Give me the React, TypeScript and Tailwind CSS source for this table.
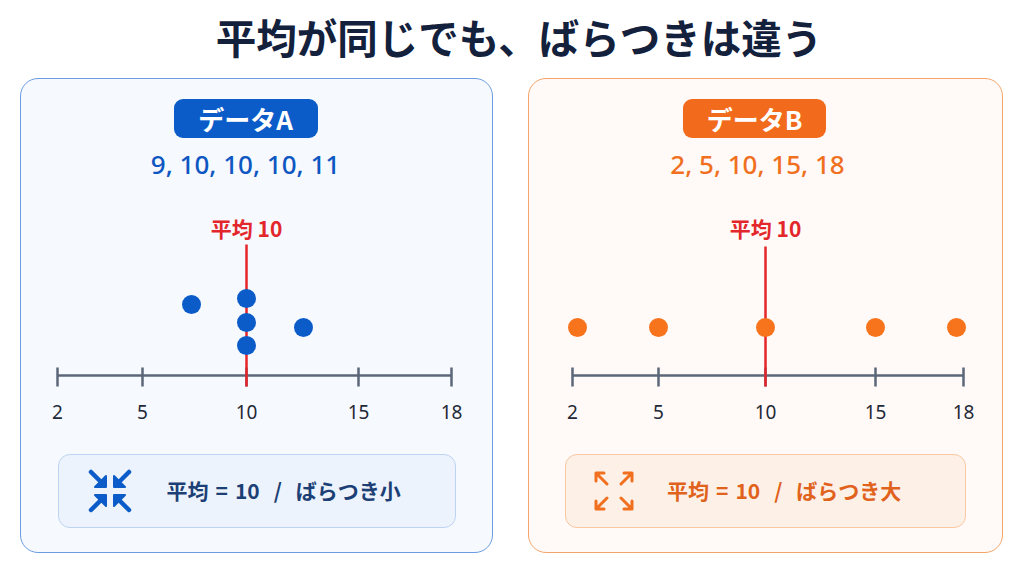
import React from "react";

type Dot = { x: number; y: number };

type ChartProps = {
  ticks: { x: number; label: string }[];
  axisFrom: number;
  axisTo: number;
  meanX: number;
  lineTop: number;
  dots: Dot[];
  dotColor: string;
};

function DotChart({ ticks, axisFrom, axisTo, meanX, lineTop, dots, dotColor }: ChartProps) {
  return (
    <svg width="470" height="262" viewBox="0 0 470 262" className="block">
      <text
        x={meanX}
        y={58.5}
        textAnchor="middle"
        fontSize="21"
        fontWeight="700"
        fill="#e3262b"
        fontFamily='"Noto Sans CJK JP", "Noto Sans", sans-serif'
      >
        平均 10
      </text>
      <line x1={axisFrom} y1={197.5} x2={axisTo} y2={197.5} stroke="#5b6778" strokeWidth="2.5" />
      {ticks.map((t) => (
        <g key={t.label}>
          <line x1={t.x} y1={189.5} x2={t.x} y2={208.5} stroke="#5b6778" strokeWidth="2.5" />
          <text
            x={t.x}
            y={240.5}
            textAnchor="middle"
            fontSize="19"
            fill="#1f2937"
            fontFamily='"Noto Sans", sans-serif'
          >
            {t.label}
          </text>
        </g>
      ))}
      <line x1={meanX} y1={lineTop} x2={meanX} y2={208.5} stroke="#e5252a" strokeWidth="2.5" />
      {dots.map((d, i) => (
        <circle key={i} cx={d.x} cy={d.y} r="9.5" fill={dotColor} />
      ))}
    </svg>
  );
}

function ShrinkIcon() {
  return (
    <svg width="44" height="44" viewBox="0 0 44 44" fill="#0b5cc8" stroke="#0b5cc8" strokeLinecap="round" strokeLinejoin="round">
      <line x1="3" y1="3" x2="12" y2="12" strokeWidth="4.5" />
      <polygon points="18,18 18,7 7,18" strokeWidth="2" />
      <line x1="41" y1="3" x2="32" y2="12" strokeWidth="4.5" />
      <polygon points="26,18 26,7 37,18" strokeWidth="2" />
      <line x1="3" y1="41" x2="12" y2="32" strokeWidth="4.5" />
      <polygon points="18,26 7,26 18,37" strokeWidth="2" />
      <line x1="41" y1="41" x2="32" y2="32" strokeWidth="4.5" />
      <polygon points="26,26 37,26 26,37" strokeWidth="2" />
    </svg>
  );
}

function ExpandIcon() {
  return (
    <svg width="44" height="44" viewBox="0 0 44 44" fill="none" stroke="#f0701f" strokeWidth="3" strokeLinecap="round" strokeLinejoin="round">
      <path d="M15 15 4 4M4 12V4h8" />
      <path d="M29 15 40 4M32 4h8v8" />
      <path d="M15 29 4 40M4 32v8h8" />
      <path d="M29 29 40 40M40 32v8h-8" />
    </svg>
  );
}

export default function App() {
  return (
    <div
      className="w-[1024px] h-[576px] bg-white flex flex-col overflow-hidden"
      style={{ fontFamily: '"Noto Sans", "Noto Sans CJK JP", sans-serif' }}
    >
      <div className="h-[78px] pb-[4px] pl-[14px] flex items-center justify-center">
        <h1 className="text-[40.5px] leading-none font-bold text-[#13213c]" style={{ fontFamily: '"Noto Sans CJK JP", sans-serif' }}>
          平均が同じでも、ばらつきは違う
        </h1>
      </div>

      <div className="flex gap-[35px] pl-[20px]">
        {/* data A */}
        <div className="w-[473px] h-[475px] rounded-[18px] border-[1.5px] border-[#6b9be0] bg-[#f6f9fe] flex flex-col items-center pt-[20px]">
          <div className="mr-[22px] w-[144px] h-[39px] rounded-[9px] bg-[#0b5cc8] flex items-center justify-center">
            <span className="text-white text-[26px] font-bold leading-none" style={{ fontFamily: '"Noto Sans CJK JP", sans-serif' }}>
              データA
            </span>
          </div>
          <div className="mr-[22px] mt-[12px] h-[28px] leading-[28px] text-[26px] font-medium text-[#0d57c2]">
            9, 10, 10, 10, 11
          </div>
          <DotChart
            ticks={[
              { x: 35.5, label: "2" },
              { x: 120.5, label: "5" },
              { x: 224.5, label: "10" },
              { x: 336.5, label: "15" },
              { x: 429.5, label: "18" },
            ]}
            axisFrom={35.5}
            axisTo={429.5}
            meanX={224.5}
            lineTop={66.5}
            dotColor="#0b5cc8"
            dots={[
              { x: 169.5, y: 126.5 },
              { x: 224.5, y: 120.5 },
              { x: 224.5, y: 144.5 },
              { x: 224.5, y: 167.5 },
              { x: 281.5, y: 149.5 },
            ]}
          />
          <div className="mt-[14px] w-[398px] h-[74px] rounded-[12px] border border-[#bcd3f1] bg-[#edf3fc] flex items-center pl-[29px]">
            <ShrinkIcon />
            <div className="ml-[35px] text-[21px] font-bold text-[#1c3f75] flex items-center" style={{ fontFamily: '"Noto Sans CJK JP", sans-serif' }}>
              <span>平均</span>
              <span className="mx-[7px]">=</span>
              <span>10</span>
              <span className="mx-[14px]">/</span>
              <span>ばらつき小</span>
            </div>
          </div>
        </div>

        {/* data B */}
        <div className="w-[475px] h-[475px] rounded-[18px] border-[1.5px] border-[#f4a468] bg-[#fffaf7] flex flex-col items-center pt-[20px]">
          <div className="mr-[22px] w-[143px] h-[39px] rounded-[9px] bg-[#f26b1d] flex items-center justify-center">
            <span className="text-white text-[26px] font-bold leading-none" style={{ fontFamily: '"Noto Sans CJK JP", sans-serif' }}>
              データB
            </span>
          </div>
          <div className="mr-[16px] mt-[12px] h-[28px] leading-[28px] text-[26px] font-medium text-[#f0701f]">
            2, 5, 10, 15, 18
          </div>
          <DotChart
            ticks={[
              { x: 41.5, label: "2" },
              { x: 127.5, label: "5" },
              { x: 234.5, label: "10" },
              { x: 344.5, label: "15" },
              { x: 432.5, label: "18" },
            ]}
            axisFrom={41.5}
            axisTo={432.5}
            meanX={234.5}
            lineTop={68.5}
            dotColor="#f7731c"
            dots={[
              { x: 46.5, y: 149.5 },
              { x: 127.5, y: 149.5 },
              { x: 234.5, y: 149.5 },
              { x: 344.5, y: 149.5 },
              { x: 425.5, y: 149.5 },
            ]}
          />
          <div className="mt-[14px] w-[401px] h-[74px] rounded-[12px] border border-[#f9c7a0] bg-[#fdf0e6] flex items-center pl-[26px]">
            <ExpandIcon />
            <div className="ml-[31px] text-[21px] font-bold text-[#e0621c] flex items-center" style={{ fontFamily: '"Noto Sans CJK JP", sans-serif' }}>
              <span>平均</span>
              <span className="mx-[7px]">=</span>
              <span>10</span>
              <span className="mx-[14px]">/</span>
              <span>ばらつき大</span>
            </div>
          </div>
        </div>
      </div>
    </div>
  );
}
